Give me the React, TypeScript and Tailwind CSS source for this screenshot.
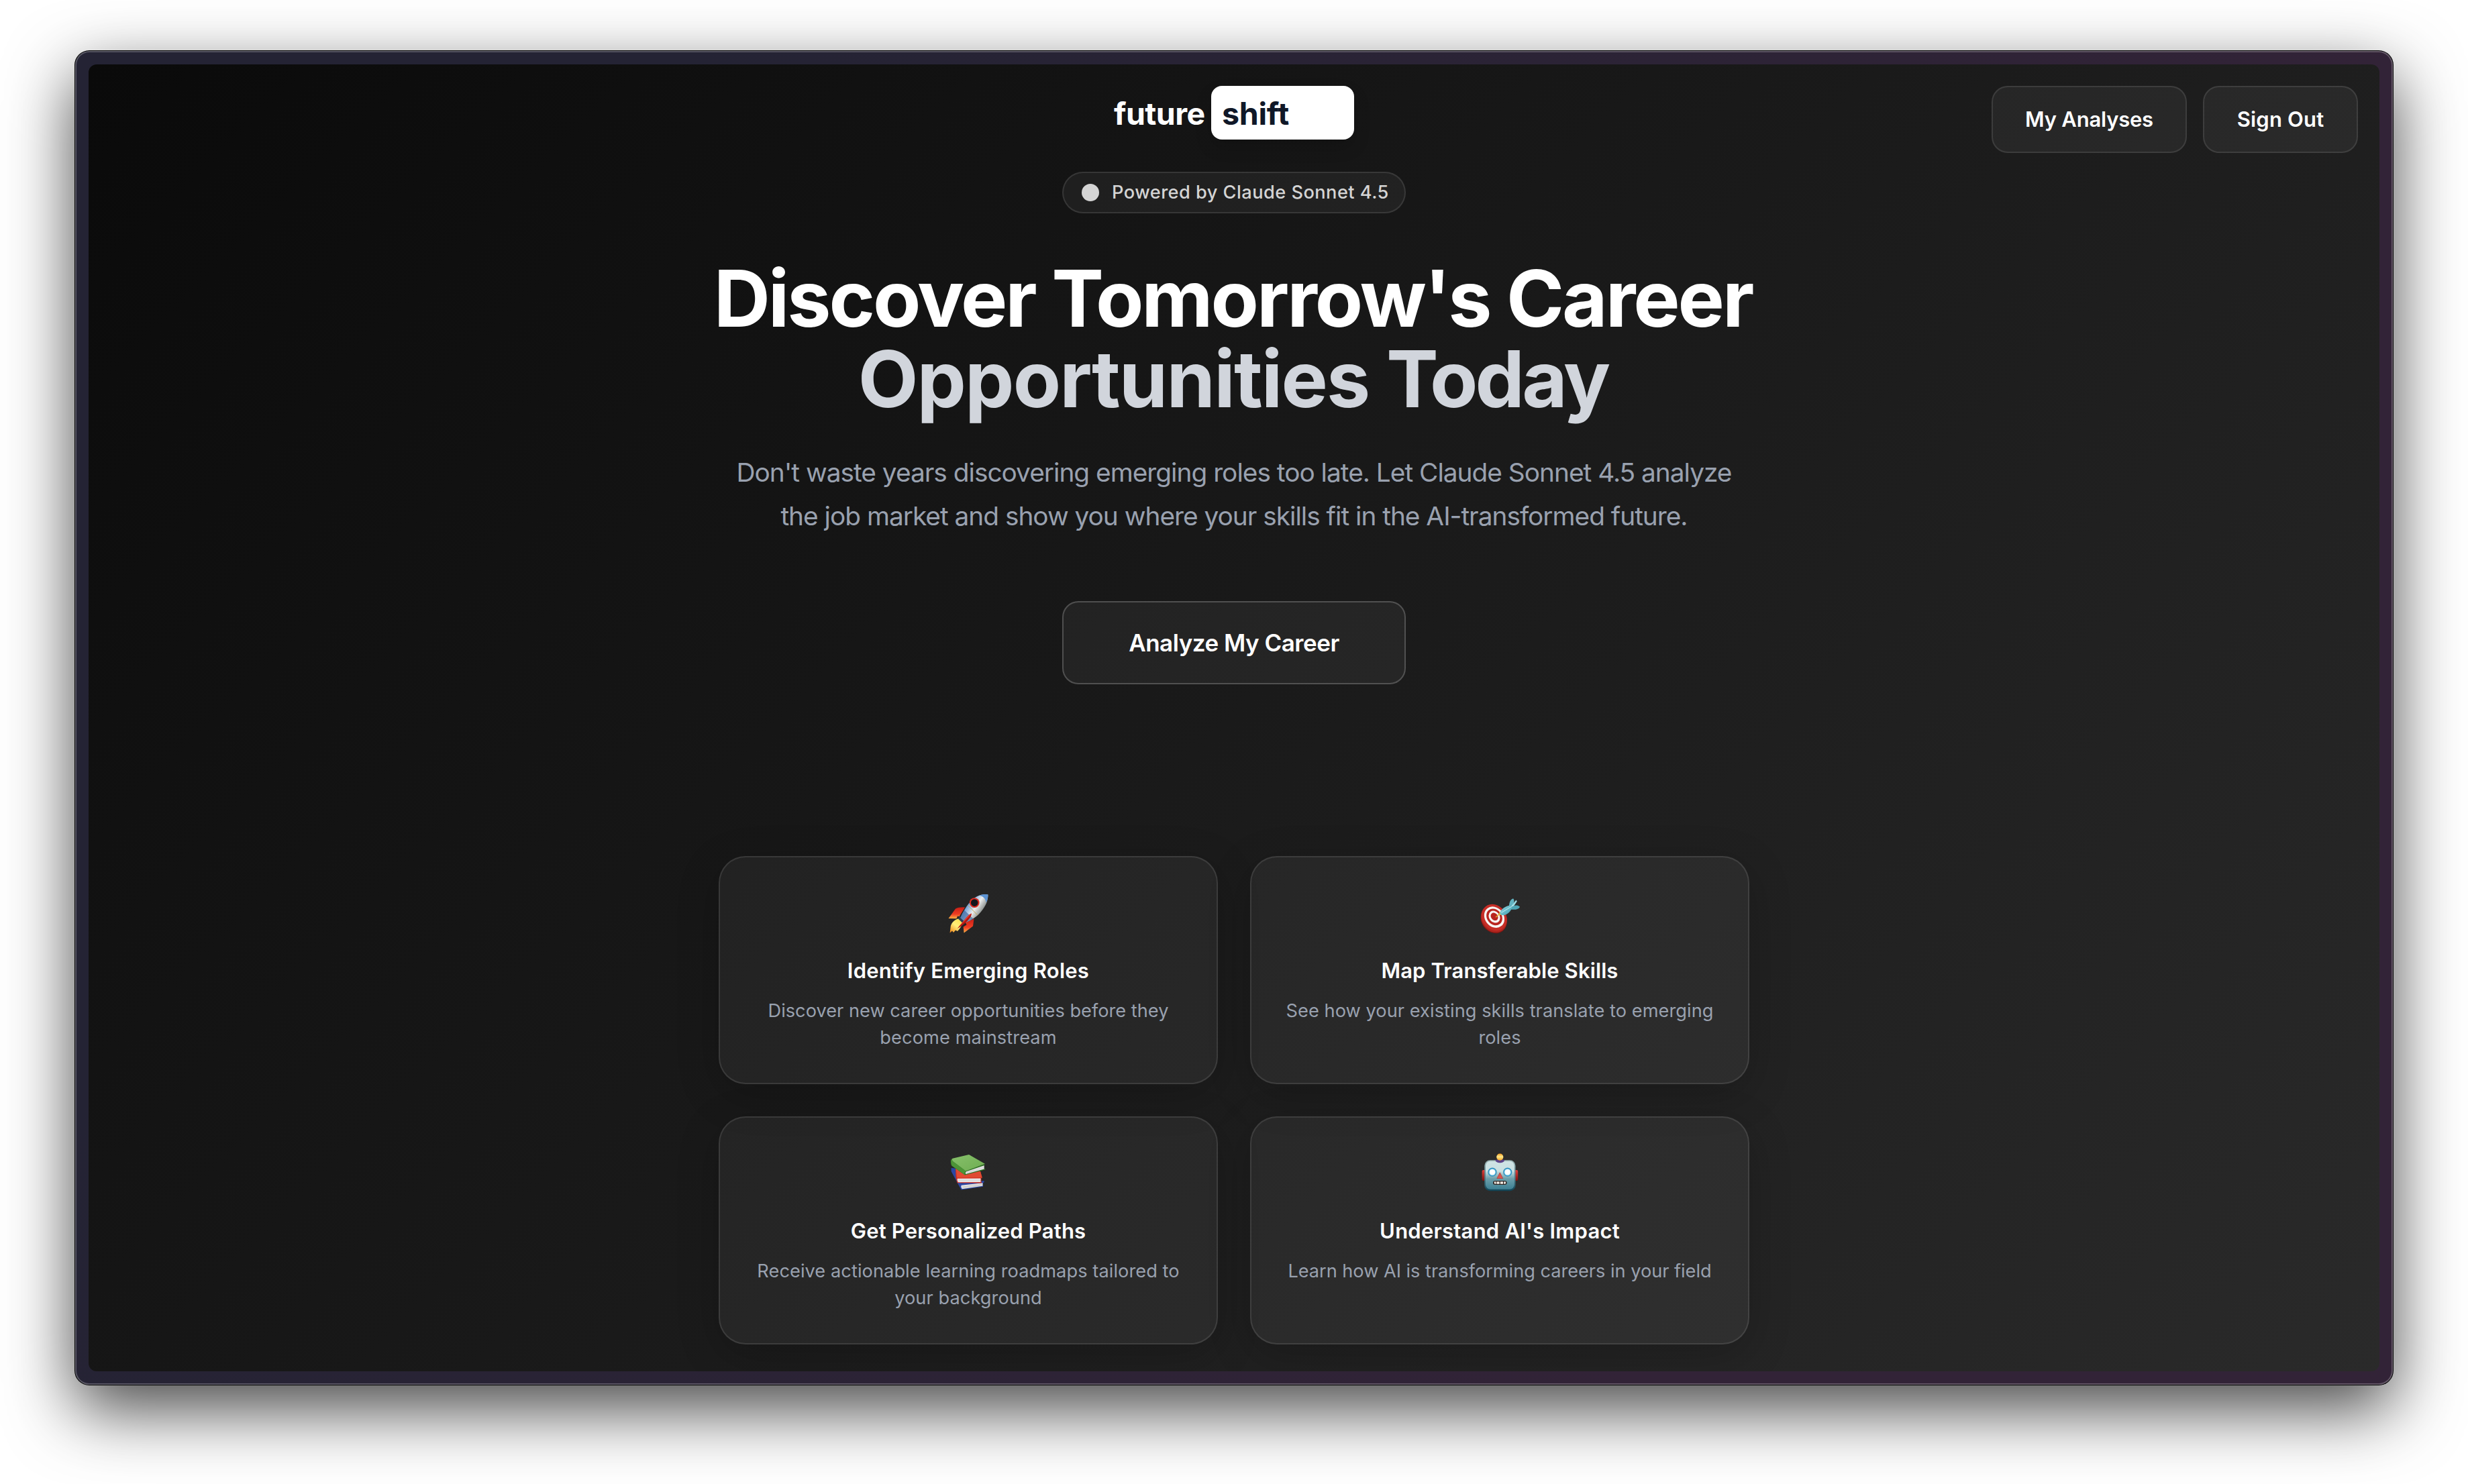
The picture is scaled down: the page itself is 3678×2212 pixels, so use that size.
import React from 'react';

function Rocket() {
  return (
    <svg viewBox="0 0 72 72" className="size-[72px]">
      <defs>
        <linearGradient id="rk-body" x1="30" y1="22" x2="54" y2="38" gradientUnits="userSpaceOnUse">
          <stop offset="0" stopColor="#3f6fae" />
          <stop offset="0.3" stopColor="#8db4e0" />
          <stop offset="0.62" stopColor="#eceeee" />
          <stop offset="1" stopColor="#8d9290" />
        </linearGradient>
        <linearGradient id="rk-fin" x1="0" y1="0" x2="0" y2="1">
          <stop offset="0" stopColor="#c81f17" />
          <stop offset="0.6" stopColor="#ee3d22" />
          <stop offset="1" stopColor="#ffb445" />
        </linearGradient>
        <linearGradient id="rk-flame" x1="26" y1="46" x2="10" y2="66" gradientUnits="userSpaceOnUse">
          <stop offset="0" stopColor="#ffe04a" />
          <stop offset="0.5" stopColor="#fff07a" />
          <stop offset="1" stopColor="#f28a1c" />
        </linearGradient>
      </defs>
      <path d="M22 45 C14 47 10 53 9.6 58 L8.6 66.6 L12 63.5 L14 66 L17 62.5 L20 64 C24 60 27 55 27.6 49.5 Z" fill="url(#rk-flame)" />
      <path d="M31 28.5 C25 28 20 29 17 30.6 L6.5 45 L18.5 45.3 L20 41.4 L22.6 42 Z" fill="url(#rk-fin)" />
      <path d="M44.5 45.5 L43 56.5 L29.6 66.4 L28.6 57.5 L33.5 54.5 L31.8 51 Z" fill="url(#rk-fin)" />
      <path d="M23.6 41.5 L31.6 50.6 L28 52.6 L21 45.6 Z" fill="#2c4058" />
      <path d="M65.4 9.6 C57 8 47.5 11.5 41.5 17.5 C34 25 28 35 24.4 44 L32 51 C41 47.5 49.5 42 55 35 C61.5 27.5 65.6 19 65.4 9.6 Z" fill="url(#rk-body)" />
      <path d="M24.4 44 C25.8 40 28 36 30 32.6 L43.6 45.6 C40 47.8 36 49.6 32 51 Z" fill="#3a64a0" opacity="0.65" />
      <path d="M65.4 9.6 C61 8.6 56.4 9.2 52.4 10.8 C58 11.6 62 15.6 62.6 21.6 C64.6 17.6 65.6 13.6 65.4 9.6 Z" fill="#5c93d3" />
      <path d="M35.6 25.6 L49.8 40" stroke="#caa650" strokeWidth="0.9" />
      <circle cx="45.2" cy="21.6" r="7.4" fill="#d82c22" />
      <circle cx="45.2" cy="21.6" r="5.3" fill="#14171d" />
      <path d="M40.8 37.4 C37 38.6 32 45 28 50 L19.6 60 C26 57 33 51 37 46 C39.6 42.8 41.2 39.6 40.8 37.4 Z" fill="#b01813" />
      <path d="M40.8 37.4 C37 38.6 32 45 28 50 L22 57 C28 52 36 43.6 40.8 37.4 Z" fill="#ef3a2a" />
    </svg>
  );
}

function Target() {
  return (
    <svg viewBox="0 0 72 72" className="size-[72px]">
      <defs>
        <linearGradient id="tg-dart" x1="0" y1="0" x2="1" y2="1">
          <stop offset="0" stopColor="#8fd8e4" />
          <stop offset="1" stopColor="#3f9bab" />
        </linearGradient>
      </defs>
      <g transform="rotate(-38 27.5 45)">
        <ellipse cx="26" cy="46.4" rx="18.2" ry="21.4" fill="#7e1712" />
        <ellipse cx="27" cy="45.4" rx="18.2" ry="21.4" fill="#b0241e" />
        <ellipse cx="28.6" cy="44" rx="17.8" ry="20.8" fill="#c52d26" />
        <ellipse cx="29" cy="43.8" rx="14" ry="16.8" fill="#f7f5f3" />
        <ellipse cx="29.2" cy="43.6" rx="10.9" ry="13.2" fill="#b9251f" />
        <ellipse cx="29.4" cy="43.4" rx="7.9" ry="9.6" fill="#f7f5f3" />
        <ellipse cx="29.6" cy="43.2" rx="5" ry="6.2" fill="#b9251f" />
      </g>
      <path d="M30.4 42.8 L39 35.6" stroke="#e0ad2c" strokeWidth="1.4" strokeLinecap="round" />
      <path d="M35 40 L35.6 34.6 L41.6 39.8 Z" fill="#e3b53a" />
      <path d="M50 26.6 C50 21 52 16.6 56 15.2 C58.4 17.6 57.6 22.6 55 26.4 Z" fill="#62b3c1" />
      <path d="M53 27 L60.4 17.6 L61.8 19.4 L56 28 Z" fill="#9ddde6" />
      <path d="M52 29.6 C56 25 62 24 66 27.4 C65 31.6 58 32.4 52.6 31.4 Z" fill="#4ea5b5" />
      <path d="M36.4 36.4 C38 31.6 43 27.4 51 25.6 L54.6 28 C53 34 48 39.4 41.6 40.2 C38.6 40.4 36 39 36.4 36.4 Z" fill="url(#tg-dart)" />
      <path d="M38.4 36.4 L56.6 25.4" stroke="#bdeaf0" strokeWidth="1.1" />
    </svg>
  );
}

function Books() {
  return (
    <svg viewBox="0 0 72 72" className="size-[72px]">
      <defs>
        <linearGradient id="bk-green" x1="0" y1="0" x2="1" y2="1">
          <stop offset="0" stopColor="#86bf6a" />
          <stop offset="1" stopColor="#6fae52" />
        </linearGradient>
      </defs>
      <path d="M10.6 29 L17.4 29.6 L25.4 51.4 L59.4 48 L59.6 50 L57.8 51.4 L58 56.8 L25.6 61.4 L23 57 L10.6 34 Z" fill="#2b46a4" />
      <path d="M25.6 54.8 L57.4 51.2 L57.4 55.8 L27 60.2 C25.4 59 25 56.6 25.6 54.8 Z" fill="#e4e4e4" />
      <path d="M27 57 L57.4 53 M27.4 58.6 L57.4 54.6" stroke="#adadad" strokeWidth="0.5" />
      <path d="M17 28.6 L54 34 L56.8 43.6 L55.4 44 L55.4 50 L56.4 51.6 L19.6 51.2 L17.4 43 Z" fill="#cf2f20" />
      <path d="M17.4 29 L54 34 L56.6 43.2 L19.2 43.6 Z" fill="#e04a32" />
      <path d="M19.8 44.8 L54.4 44.4 L54.4 50 L21 50.2 C19.6 48.8 19.4 46.2 19.8 44.8 Z" fill="#f0f0f0" />
      <path d="M20.6 46.8 H54.4 M20.8 48.4 H54.4" stroke="#b4b4b4" strokeWidth="0.5" />
      <path d="M10.4 16.6 C9.4 19 9.8 22.8 11 25.4 L31 39.4 L61.4 31.6 L61 30 L59.4 29.8 L59.6 25 L61 23 L32 32 Z" fill="#2f6f24" />
      <path d="M33 34.2 L59.6 25.2 L59.6 30.4 L32.4 38 C31.4 36.8 31.8 35 33 34.2 Z" fill="#ededed" />
      <path d="M33 35.6 L59.6 27 M33 36.9 L59.6 28.8" stroke="#b0b0b0" strokeWidth="0.5" />
      <path d="M12.6 14.8 L37 9 L60.8 22.8 L32.2 33.4 L13 19 C11.6 17.6 11 15.6 12.6 14.8 Z" fill="url(#bk-green)" />
      <path d="M12.6 14.8 C10.4 15.4 9.8 17.8 10.4 20.6 C10.6 22.6 10.8 24 11.4 25.4 L30.8 39 C30.2 37 30.6 34.8 32.2 33.4 L13 19 C11.6 17.6 11 15.6 12.6 14.8 Z" fill="#4d9437" />
    </svg>
  );
}

function Robot() {
  return (
    <svg viewBox="0 0 72 72" className="size-[72px]">
      <defs>
        <linearGradient id="rb-head" x1="0" y1="0" x2="0" y2="1">
          <stop offset="0" stopColor="#cfe3e4" />
          <stop offset="0.35" stopColor="#c9e0e2" />
          <stop offset="0.62" stopColor="#6c9fab" />
          <stop offset="1" stopColor="#3d8093" />
        </linearGradient>
        <linearGradient id="rb-rim" x1="0" y1="0" x2="0" y2="1">
          <stop offset="0" stopColor="#9bb3b3" />
          <stop offset="0.6" stopColor="#4c7c88" />
          <stop offset="1" stopColor="#0f4355" />
        </linearGradient>
        <linearGradient id="rb-ball" x1="0" y1="0" x2="0" y2="1">
          <stop offset="0" stopColor="#f39a1e" />
          <stop offset="0.45" stopColor="#ffe98a" />
          <stop offset="1" stopColor="#f5a01f" />
        </linearGradient>
        <linearGradient id="rb-ear" x1="0" y1="0" x2="0" y2="1">
          <stop offset="0" stopColor="#e0403a" />
          <stop offset="1" stopColor="#7d1210" />
        </linearGradient>
      </defs>
      <rect x="9.6" y="32" width="8" height="16" rx="2" fill="url(#rb-ear)" />
      <rect x="55.2" y="32" width="8" height="16" rx="2" fill="url(#rb-ear)" />
      <rect x="13.2" y="17.2" width="46.4" height="46" rx="8.5" fill="url(#rb-rim)" />
      <rect x="15" y="18.8" width="42.8" height="42" rx="7" fill="url(#rb-head)" />
      <path d="M29.6 17.4 C30 22.4 42.6 22.4 43 17.4 C41 15.4 31.6 15.4 29.6 17.4 Z" fill="#5c4388" />
      <circle cx="36.3" cy="12.6" r="5.1" fill="url(#rb-ball)" />
      <circle cx="25" cy="35.2" r="6.6" fill="#2f8fbe" />
      <circle cx="25" cy="35.2" r="5.3" fill="#7dcbe8" />
      <circle cx="25" cy="35.2" r="4.1" fill="#ffffff" />
      <circle cx="47.7" cy="35.2" r="6.6" fill="#2f8fbe" />
      <circle cx="47.7" cy="35.2" r="5.3" fill="#7dcbe8" />
      <circle cx="47.7" cy="35.2" r="4.1" fill="#ffffff" />
      <path d="M36.3 35.8 L40.8 44.6 H31.8 Z" fill="#d9544e" stroke="#b23833" strokeWidth="0.7" strokeLinejoin="round" />
      <rect x="26" y="48" width="20.6" height="6" rx="3" fill="#2b2422" />
      <path d="M28 49.2 H30.4 V52.8 H28.6 Q27 51 28 49.2 Z M31.4 49.2 H35.6 V52.8 H31.4 Z M36.8 49.2 H41 V52.8 H36.8 Z M42.2 49.2 H44.6 Q45.8 51 44.4 52.8 H42.2 Z" fill="#f3ece4" />
    </svg>
  );
}

type Feature = { icon: React.ReactNode; title: string; titleClass: string; lines: { text: string; cls: string }[] };

const features: Feature[] = [
  {
    icon: <Rocket />,
    title: 'Identify Emerging Roles',
    titleClass: 'tracking-[0.235px]',
    lines: [
      { text: 'Discover new career opportunities before they', cls: 'tracking-[0.009px]' },
      { text: 'become mainstream', cls: 'tracking-[0.1px]' },
    ],
  },
  {
    icon: <Target />,
    title: 'Map Transferable Skills',
    titleClass: 'tracking-[0.119px]',
    lines: [
      { text: 'See how your existing skills translate to emerging', cls: 'tracking-[0.058px]' },
      { text: 'roles', cls: 'tracking-[0.058px]' },
    ],
  },
  {
    icon: <Books />,
    title: 'Get Personalized Paths',
    titleClass: 'tracking-[0.177px]',
    lines: [
      { text: 'Receive actionable learning roadmaps tailored to', cls: 'tracking-[0.069px]' },
      { text: 'your background', cls: 'tracking-[0.069px]' },
    ],
  },
  {
    icon: <Robot />,
    title: "Understand AI's Impact",
    titleClass: 'tracking-[0.233px]',
    lines: [{ text: 'Learn how AI is transforming careers in your field', cls: 'tracking-[-0.032px]' }],
  },
];

function Header() {
  return (
    <header className="grid grid-cols-[1fr_auto_1fr] items-start px-8 pt-8">
      <div />
      <div className="flex h-20 w-[358px] items-stretch justify-between whitespace-nowrap text-[46.5px] font-bold leading-[80px]">
        <span className="pt-px tracking-[-0.546px] text-white">future</span>
        <span className="w-[213px] rounded-2xl bg-white pl-4 pt-px tracking-[-0.25px] text-[#101828] shadow-[0_12px_24px_rgba(0,0,0,0.15)]">
          shift
        </span>
      </div>
      <nav className="flex justify-end gap-6 text-[31px] font-semibold text-white">
        <button className="h-[100px] w-[291px] rounded-3xl border-2 border-white/10 bg-white/[0.05] pt-px tracking-[-0.219px]">
          My Analyses
        </button>
        <button className="h-[100px] w-[231px] rounded-3xl border-2 border-white/10 bg-white/[0.05] pt-px tracking-[0.179px]">
          Sign Out
        </button>
      </nav>
    </header>
  );
}

function FeatureCard({ icon, title, titleClass, lines }: Feature) {
  return (
    <article className="flex h-[340px] flex-col items-center rounded-[40px] border-2 border-white/10 bg-white/[0.05] pt-[46px] text-center shadow-[0_16px_64px_rgba(0,0,0,0.2)]">
      {icon}
      <h3 className={`mt-[26.5px] text-[31px] font-semibold leading-[48px] text-white ${titleClass}`}>{title}</h3>
      <p className="mt-4 text-[27.2px] leading-10 text-[#99a1af]">
        {lines.map((l) => (
          <span key={l.text} className={`block ${l.cls}`}>
            {l.text}
          </span>
        ))}
      </p>
    </article>
  );
}

export default function App() {
  return (
    <div className="flex h-[2212px] w-[3678px] items-start overflow-hidden bg-white pl-[111px] pt-[75px] font-['Inter',sans-serif]">
      <div className="h-[1990px] w-[3456px] rounded-[22px] bg-black p-px shadow-[0_36px_100px_rgba(0,0,0,0.72)]">
        <div className="size-full rounded-[21px] bg-[linear-gradient(120deg,#242334_20%,#322337_75%)] p-5 shadow-[inset_0_0_0_2px_rgba(255,255,255,0.24)]">
          <main className="flex size-full flex-col overflow-hidden rounded-[12px] bg-[linear-gradient(135deg,#0a0a0a_0%,#1a1a1a_50%,#2a2a2a_100%)]">
            <Header />
            <section className="flex flex-col items-center text-center">
              <div className="mt-7 flex h-[62px] w-[512px] items-center rounded-full border-2 border-white/10 bg-white/5 pl-[27px]">
                <span className="size-[26px] rounded-full bg-[#d4d4d4]" />
                <span className="ml-[19px] whitespace-nowrap pt-px text-[27.2px] font-medium tracking-[0.46px] text-[#d4d4d4]">
                  Powered by Claude Sonnet 4.5
                </span>
              </div>
              <h1 className="mt-[66.5px] whitespace-nowrap pr-[3px] text-[116.5px] font-bold leading-[120px]">
                <span className="block tracking-[-3.04px] text-white">Discover Tomorrow's Career</span>
                <span className="block tracking-[-1.87px] text-[#d1d5dc]">
                  Opportunities <span className="tracking-[-3.8px]">Today</span>
                </span>
              </h1>
              <p className="mt-[46.5px] whitespace-nowrap text-[38.8px] leading-[65px] text-[#99a1af]">
                <span className="block tracking-[-0.991px]">
                  Don't waste years discovering emerging roles too late. Let Claude Sonnet 4.5 analyze
                </span>
                <span className="block tracking-[-1px]">
                  the job market and show you where your skills fit in the AI-transformed future.
                </span>
              </p>
              <button className="mt-[95px] h-[124px] w-[512px] rounded-3xl border-2 border-white/20 bg-white/5 text-[35px] font-semibold tracking-[-0.493px] text-white">
                Analyze My Career
              </button>
            </section>
            <section className="mx-auto mt-64 grid w-[1536px] grid-cols-2 gap-12">
              {features.map((f) => (
                <FeatureCard key={f.title} {...f} />
              ))}
            </section>
          </main>
        </div>
      </div>
    </div>
  );
}
